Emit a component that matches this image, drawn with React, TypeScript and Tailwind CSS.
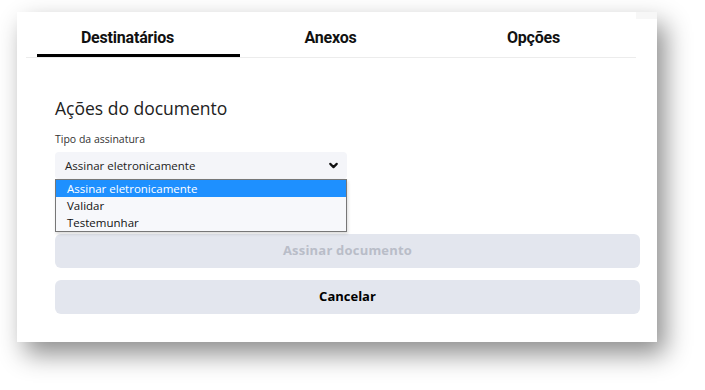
import { ChevronDown } from "lucide-react";

const tabs = ["Destinatários", "Anexos", "Opções"];
const options = ["Assinar eletronicamente", "Validar", "Testemunhar"];

export default function App() {
  return (
    <div className="w-[705px] h-[390px] bg-white pl-[17px] pt-[12px] overflow-hidden">
      <div className="relative w-[640px] h-[330px] bg-white shadow-[8px_12px_24px_rgba(0,0,0,0.45)] font-['Open_Sans',sans-serif]">
        {/* screenshot artefact on the top-right corner */}
        <div className="absolute right-0 top-0 w-[21px] h-[7px] bg-[#f7f7f7]" />

        {/* tabs */}
        <div className="ml-[9px] w-[610px]">
          <div className="flex h-[42px] font-['Roboto',sans-serif] font-bold text-[16px] tracking-[-0.2px] text-[#111]">
            {tabs.map((t) => (
              <div key={t} className="w-[203px] pt-[16px] leading-[20px] text-center">
                {t}
              </div>
            ))}
          </div>
          <div className="h-[3px] ml-[11px] w-[203px] bg-black" />
          <div className="h-[1px] bg-[#ececec]" />
        </div>

        {/* content */}
        <div className="relative ml-[38px] mr-[17px] pt-[38px]">
          <h2 className="text-[17.5px] leading-[24px] text-[#222]">Ações do documento</h2>
          <div className="mt-[11px] text-[10.5px] leading-[16px] text-[#333]">Tipo da assinatura</div>
          <div className="mt-[5px] w-[292px] h-[27px] rounded-[4px] bg-[#f4f5f9] flex items-center justify-between pl-[10px] pr-[7px] text-[11.5px] text-[#222]">
            <span>Assinar eletronicamente</span>
            <ChevronDown size={13} strokeWidth={4} className="text-[#111]" />
          </div>

          {/* open select list */}
          <div className="absolute left-0 top-[121px] z-10 w-[292px] border border-[#777] bg-[#f7f8fb] text-[11.5px] text-[#111] shadow-[1px_2px_3px_rgba(0,0,0,0.15)]">
            {options.map((o, i) => (
              <div
                key={o}
                className={
                  i === 0
                    ? "h-[17px] leading-[17px] pl-[11px] bg-[#1e90ff] text-white"
                    : "h-[17px] leading-[17px] pl-[11px]"
                }
              >
                {o}
              </div>
            ))}
          </div>

          <button className="mt-[55px] w-full h-[34px] rounded-[6px] bg-[#e3e6ee] text-[13px] tracking-[0.2px] font-bold text-[#b9bdc8]">
            Assinar documento
          </button>
          <button className="mt-[12px] w-full h-[34px] rounded-[6px] bg-[#e3e6ee] text-[13px] font-bold text-black">
            Cancelar
          </button>
        </div>
      </div>
    </div>
  );
}
